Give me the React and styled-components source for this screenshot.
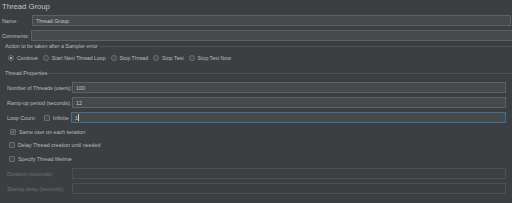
import React from "react";
import styled, { createGlobalStyle } from "styled-components";

const GlobalStyle = createGlobalStyle`
  html, body {
    margin: 0;
    padding: 0;
    background: #3c3f41;
  }
  body {
    font-family: "Liberation Sans", Arial, sans-serif;
    color: #bbbbbb;
    width: 512px;
    height: 203px;
    overflow: hidden;
  }
`;

const Page = styled.div`
  display: flex;
  flex-direction: column;
  width: 512px;
  height: 203px;
  background: #3c3f41;
`;

const Title = styled.div`
  height: 15px;
  line-height: 14px;
  padding-left: 2px;
  font-size: 7.7px;
  color: #c4c4c4;
`;

const Row = styled.div`
  display: flex;
  align-items: center;
  height: 11px;
  margin-top: ${p => p.$top || 0}px;
  padding-left: ${p => p.$left || 0}px;
  padding-right: ${p => p.$right || 0}px;
`;

const Label = styled.span`
  flex: none;
  width: ${p => p.$width}px;
  font-size: 5.3px;
  white-space: nowrap;
  color: ${p => (p.$disabled ? "#6e7072" : "#bbbbbb")};
`;

const Field = styled.div`
  flex: 1;
  height: 11px;
  box-sizing: border-box;
  display: flex;
  align-items: center;
  padding-left: 3px;
  font-size: 5.3px;
  color: #c8c8c8;
  background: ${p => (p.$disabled ? "#3c3f41" : "#45494a")};
  border: 1px solid ${p => (p.$focused ? "#466d94" : p.$disabled ? "#4c5052" : "#5d6163")};
  margin-right: ${p => (p.$bleed ? -4 : 0)}px;
`;

const Caret = styled.span`
  display: inline-block;
  width: 1px;
  height: 7px;
  margin-left: 0.5px;
  background: #d0d0d0;
`;

const GroupHeader = styled.div`
  display: flex;
  align-items: center;
  height: 8px;
  margin-top: ${p => p.$top}px;
  padding-left: 5px;
`;

const Legend = styled.span`
  font-size: 5.3px;
  white-space: nowrap;
  margin-right: 2px;
`;

const Line = styled.div`
  flex: 1;
  height: 1px;
  background: #4e5254;
`;

const RadioRow = styled.div`
  display: flex;
  align-items: center;
  gap: 5px;
  height: 10px;
  margin-top: 3px;
  padding-left: 8px;
`;

const Option = styled.div`
  display: flex;
  align-items: center;
  gap: 3px;
  font-size: 5.2px;
  white-space: nowrap;
`;

const Radio = styled.span`
  position: relative;
  width: 6px;
  height: 6px;
  box-sizing: border-box;
  border-radius: 50%;
  border: 1px solid #6b6e70;
  background: #43494a;
  &::after {
    content: "";
    display: ${p => (p.$checked ? "block" : "none")};
    position: absolute;
    left: 1px;
    top: 1px;
    width: 2px;
    height: 2px;
    border-radius: 50%;
    background: #c8c8c8;
  }
`;

const Box = styled.span`
  flex: none;
  width: 6px;
  height: 6px;
  box-sizing: border-box;
  border: 1px solid #6b6e70;
  border-radius: 1px;
  background: #43494a;
  display: flex;
  align-items: center;
  justify-content: center;
`;

const CheckRow = styled.div`
  display: flex;
  align-items: center;
  gap: 3px;
  height: 10px;
  margin-top: ${p => p.$top}px;
  padding-left: ${p => p.$left || 9}px;
  font-size: 5.3px;
  white-space: nowrap;
`;

const LoopExtra = styled.div`
  display: flex;
  align-items: center;
  gap: 3px;
  width: 27px;
  flex: none;
  font-size: 5.3px;
`;

function Checkbox({ checked }) {
  return (
    <Box>
      {checked && (
        <svg width="6" height="6" viewBox="0 0 6 6">
          <polyline points="1,3 2.4,4.4 5,1" fill="none" stroke="#d0d0d0" strokeWidth="0.9" />
        </svg>
      )}
    </Box>
  );
}

const actions = ["Continue", "Start Next Thread Loop", "Stop Thread", "Stop Test", "Stop Test Now"];

export default function App() {
  return (
    <Page>
      <GlobalStyle />
      <Title>Thread Group</Title>

      <Row $left={2} $right={1}>
        <Label $width={30}>Name:</Label>
        <Field>Thread Group</Field>
      </Row>
      <Row $top={4} $left={2}>
        <Label $width={29}>Comments:</Label>
        <Field $bleed />
      </Row>

      <GroupHeader $top={1}>
        <Legend>Action to be taken after a Sampler error</Legend>
        <Line />
      </GroupHeader>
      <RadioRow>
        {actions.map((a, i) => (
          <Option key={a}>
            <Radio $checked={i === 0} />
            {a}
          </Option>
        ))}
      </RadioRow>

      <GroupHeader $top={6}>
        <Legend>Thread Properties</Legend>
        <Line />
      </GroupHeader>

      <Row $top={5} $left={7} $right={6}>
        <Label $width={65}>Number of Threads (users):</Label>
        <Field>100</Field>
      </Row>
      <Row $top={4} $left={7} $right={6}>
        <Label $width={65}>Ramp-up period (seconds):</Label>
        <Field>12</Field>
      </Row>
      <Row $top={4} $left={7} $right={6}>
        <Label $width={37}>Loop Count:</Label>
        <LoopExtra>
          <Checkbox />
          Infinite
        </LoopExtra>
        <Field $focused>
          1<Caret />
        </Field>
      </Row>

      <CheckRow $top={4} $left={10}>
        <Checkbox checked />
        Same user on each iteration
      </CheckRow>
      <CheckRow $top={3}>
        <Checkbox />
        Delay Thread creation until needed
      </CheckRow>
      <CheckRow $top={4}>
        <Checkbox />
        Specify Thread lifetime
      </CheckRow>

      <Row $top={4} $left={7} $right={6}>
        <Label $width={65} $disabled>Duration (seconds):</Label>
        <Field $disabled />
      </Row>
      <Row $top={4} $left={7} $right={6}>
        <Label $width={65} $disabled>Startup delay (seconds):</Label>
        <Field $disabled />
      </Row>
    </Page>
  );
}
